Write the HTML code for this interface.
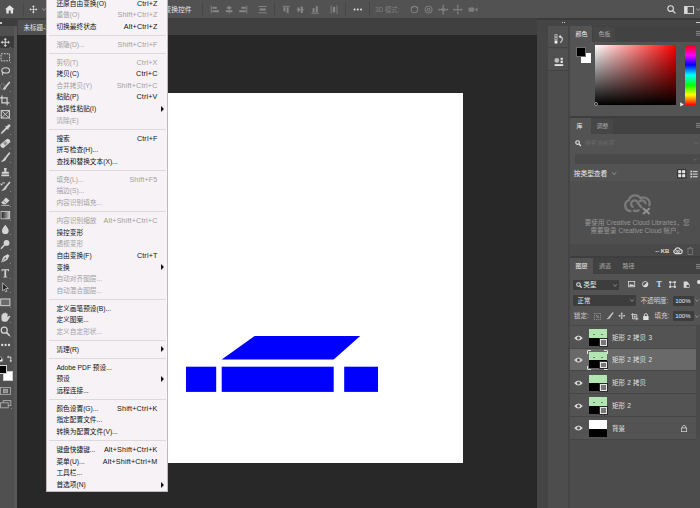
<!DOCTYPE html>
<html lang="zh-CN"><head><meta charset="utf-8"><title>Photoshop</title>
<style>
*{box-sizing:border-box;margin:0;padding:0}
html,body{width:700px;height:508px;overflow:hidden;background:#282828}
body{position:relative;font-family:"Liberation Sans","Noto Sans CJK SC",sans-serif;font-size:6.6px;color:#d6d6d6;-webkit-font-smoothing:antialiased}
.abs{position:absolute}
.ic{position:absolute;overflow:visible}
.t{position:absolute;white-space:nowrap;line-height:10px;height:10px}
/* top */
#opt{left:0;top:0;width:700px;height:18.2px;background:#525252}
#optline{left:0;top:18.2px;width:700px;height:1.6px;background:#3f3f3f}
#tabbar{left:0;top:19.8px;width:538px;height:15.3px;background:#404040}
#doctab{left:17.5px;top:19.8px;width:60px;height:15.3px;background:#4f4f4f}
#toolhdr{left:0;top:19.8px;width:16.6px;height:6.4px;background:#3d3d3d}
#tools{left:0;top:26.2px;width:16.6px;height:483px;background:linear-gradient(to right,#505050 0,#505050 13.6px,#585858 14.4px,#585858 100%)}
.tri{position:absolute;width:0;height:0;border-left:1.8px solid transparent;border-bottom:1.8px solid #bdbdbd}
/* canvas */
#canvas{left:92.6px;top:92.6px;width:370.1px;height:370.3px;background:#fff}
/* right dock */
#dock{left:537.4px;top:18px;width:163px;height:490px;background:#454545}
#iconcol{left:547.6px;top:26.2px;width:20.8px;height:482px;background:#4d4d4d}
.ibtn{position:absolute;left:547.6px;width:20.6px;height:22px;background:#505050;border-bottom:1px solid #434343}
.panel{position:absolute;left:570.2px;width:130px;background:#535353}
.ptabs{position:absolute;left:570.2px;width:130px;background:#424242}
.ptab{position:absolute;background:#535353}
/* menu */
#menu{left:45.8px;top:-2px;width:122px;background:#f6f2f6;border:0.6px solid #bdb9bd;color:#111;font-size:6.7px}
.mi{position:absolute;left:0;width:120.8px;height:11.66px;line-height:11.66px;white-space:nowrap}
.mi.dis{color:#a19ea1}
.ml{position:absolute;left:9.6px;top:0}
.ms{position:absolute;right:10.1px;top:0;font-size:7.2px;letter-spacing:0.14px}
.ma{position:absolute;right:3.2px;top:2.7px;width:0;height:0;border-top:3.1px solid transparent;border-bottom:3.1px solid transparent;border-left:3.7px solid #111}
.msep{position:absolute;left:1.8px;width:117.6px;height:1px;background:#dcd8dc}
/* layers */
.lrow{position:absolute;left:570.2px;width:126px;height:22.6px;background:#535353;border-bottom:0.8px solid #474747}
.lrow.sel{background:#696969}
.eye{position:absolute;left:4.2px;top:8.4px}
.th{position:absolute;left:18.9px;top:3px;width:17.7px;height:16.6px}
.thsel:before{content:'';position:absolute;left:-1.6px;top:-1.6px;right:-1.6px;bottom:-1.6px;border:0.9px solid #e4e4e4;border-radius:1px}
.thsel:after{content:'';position:absolute;left:2.4px;top:-2px;right:2.4px;bottom:-2px;background:#696969;z-index:0}
.thsel .hm{position:absolute;left:-2px;right:-2px;top:2.4px;bottom:2.4px;background:#696969}
.tg{position:absolute;left:0;top:0;width:17.7px;height:8.5px;background:#b3e5b3;z-index:1}
.tg i{position:absolute;top:5.2px;width:1.3px;height:0.9px;background:#5f8a5f}
.tb{position:absolute;left:0;top:8.5px;width:17.7px;height:8.1px;background:#000;z-index:1}
.tk{position:absolute;right:0.2px;bottom:0.2px;width:7px;height:6.6px;border:1.9px solid #e6e6e6;background:#777;z-index:2;outline:0.6px solid #2a2a2a}
.ln{position:absolute;left:41.7px;top:6.6px;line-height:10px;font-size:6.5px;color:#e2e2e2;white-space:nowrap;word-spacing:0.5px}
.lk{position:absolute;left:111.2px;top:7.6px}
.dk{position:absolute;background:#3d3d3d;border-radius:1.2px}
</style></head><body>

<!-- canvas document -->
<div id="canvas" class="abs"></div>
<svg class="ic" style="left:0;top:0" width="700" height="508" viewBox="0 0 700 508">
 <polygon points="254.6,336.1 360.2,336.1 333.7,359.4 221.7,359.4" fill="#0000ff"/>
 <rect x="186" y="366.7" width="30.2" height="25.2" fill="#0000ff"/>
 <rect x="221.7" y="366.7" width="112" height="25.2" fill="#0000ff"/>
 <rect x="344.2" y="366.7" width="33.8" height="25.2" fill="#0000ff"/>
</svg>

<!-- option bar -->
<div id="opt" class="abs"></div>
<div id="optline" class="abs"></div>
<div id="tabbar" class="abs"></div>
<div id="doctab" class="abs"></div>
<div class="t" style="left:23.4px;top:23.4px;font-size:6.5px;color:#ececec">未标题-1 @ 50%</div>

<!-- home / move -->
<svg class="ic" style="left:5.2px;top:5.1px" width="9.4" height="8.6" viewBox="0 0 10 9.6" preserveAspectRatio="none"><path d="M5 0.2 L10 4.8 H8.6 V9.4 H6 V6.2 H4 V9.4 H1.4 V4.8 H0 Z" fill="#e4e4e4"/></svg>
<div class="abs" style="left:23.4px;top:2px;width:0.8px;height:14px;background:#494949"></div>
<svg class="ic" style="left:28.5px;top:4.8px" width="8.8" height="8.8" viewBox="0 0 12 12"><path d="M6 0.4 L8 2.8 H6.6 V5.4 H9.2 V4 L11.6 6 L9.2 8 V6.6 H6.6 V9.2 H8 L6 11.6 L4 9.2 H5.4 V6.6 H2.8 V8 L0.4 6 L2.8 4 V5.4 H5.4 V2.8 H4 Z" fill="#d8d8d8"/></svg>
<svg class="ic" style="left:41.6px;top:8px" width="4" height="3" viewBox="0 0 4 3"><path d="M0.3 0.4 L2 2.4 L3.7 0.4" fill="none" stroke="#a8a8a8" stroke-width="0.8"/></svg>

<div class="t" style="left:150.8px;top:5.2px;font-size:6.8px;color:#e6e6e6">显示变换控件</div>
<div class="abs" style="left:202.2px;top:2px;width:0.8px;height:14px;background:#474747"></div>
<div class="abs" style="left:274px;top:2px;width:0.8px;height:14px;background:#474747"></div>
<div class="abs" style="left:344.8px;top:2px;width:0.8px;height:14px;background:#474747"></div>
<div class="abs" style="left:369px;top:2px;width:0.8px;height:14px;background:#474747"></div>
<!-- align icons -->
<svg class="ic" style="left:0;top:0" width="700" height="19" viewBox="0 0 700 19">
 <g fill="#868686">
  <rect x="210.8" y="5.6" width="0.9" height="7.8"/><rect x="212.4" y="6.8" width="4.4" height="2"/><rect x="212.4" y="10.2" width="6.6" height="2"/>
  <rect x="228.7" y="5.6" width="0.9" height="7.8"/><rect x="226.9" y="6.8" width="4.4" height="2"/><rect x="225.8" y="10.2" width="6.6" height="2"/>
  <rect x="246.4" y="5.6" width="0.9" height="7.8"/><rect x="241.4" y="6.8" width="4.4" height="2"/><rect x="239.2" y="10.2" width="6.6" height="2"/>
  <rect x="258.4" y="6" width="8.4" height="0.9"/><rect x="259.6" y="8.4" width="6" height="2.2"/><rect x="258.4" y="12.4" width="8.4" height="0.9"/>
  <rect x="282.4" y="5.8" width="7.4" height="0.9"/><rect x="283.4" y="7.2" width="2" height="4.2"/><rect x="286.6" y="7.2" width="2" height="6"/>
  <rect x="296.6" y="9.2" width="7.6" height="0.9"/><rect x="297.6" y="7.4" width="2" height="4.4"/><rect x="300.8" y="6.4" width="2" height="6.6"/>
  <rect x="311.4" y="12.8" width="7.6" height="0.9"/><rect x="312.6" y="8.2" width="2" height="4.2"/><rect x="315.8" y="6.2" width="2" height="6.2"/>
  <rect x="330.6" y="5.6" width="0.9" height="8.2"/><rect x="332.8" y="6.8" width="2.4" height="5.6"/><rect x="336.6" y="5.6" width="0.9" height="8.2"/>
 </g>
 <g fill="#e2e2e2"><circle cx="354.6" cy="9.6" r="1"/><circle cx="357.8" cy="9.6" r="1"/><circle cx="361" cy="9.6" r="1"/></g>
 <g fill="none" stroke="#7d7d7d" stroke-width="1.1">
  <circle cx="414.4" cy="9.6" r="3.2"/><path d="M411 8 Q414.4 4.4 418 8"/>
  <circle cx="428.6" cy="9.6" r="3.4"/><circle cx="428.6" cy="9.6" r="1.4"/>
  <path d="M443.2 5.2 V14 M438.8 9.6 H447.6"/><circle cx="443.2" cy="9.6" r="1.6"/>
  <path d="M457.8 5.4 V13.8 M453.6 9.6 H462"/>
 </g>
 <g fill="#7d7d7d"><path d="M441.8 6 L443.2 4.4 L444.6 6Z M441.8 13.2 L443.2 14.8 L444.6 13.2Z M439.6 8.2 L438 9.6 L439.6 11Z M446.8 8.2 L448.4 9.6 L446.8 11Z"/>
  <path d="M456.4 6.4 L457.8 4.6 L459.2 6.4Z M456.4 12.8 L457.8 14.6 L459.2 12.8Z M454.6 8.2 L452.8 9.6 L454.6 11Z M461 8.2 L462.8 9.6 L461 11Z"/>
  <rect x="468.6" y="7.4" width="5.6" height="4.4" rx="0.8"/><path d="M474.6 9.6 L477.6 7.4 V11.8Z"/></g>
</svg>
<div class="t" style="left:375px;top:4.6px;font-size:6.4px;color:#7e7e7e">3D 模式:</div>
<!-- search / workspace -->
<svg class="ic" style="left:667.4px;top:5px" width="9" height="9" viewBox="0 0 9 9"><circle cx="3.6" cy="3.6" r="2.8" fill="none" stroke="#e0e0e0" stroke-width="1.1"/><path d="M5.6 5.6 L8.4 8.4" stroke="#e0e0e0" stroke-width="1.3"/></svg>
<svg class="ic" style="left:683.6px;top:5.8px" width="10" height="8" viewBox="0 0 10 8"><rect x="0.5" y="0.5" width="9" height="7" fill="none" stroke="#dcdcdc" stroke-width="0.9"/><rect x="1" y="1" width="2.6" height="6" fill="#dcdcdc"/></svg>
<svg class="ic" style="left:696.4px;top:8.4px" width="4" height="3" viewBox="0 0 4 3"><path d="M0.3 0.4 L2 2.4 L3.7 0.4" fill="none" stroke="#a8a8a8" stroke-width="0.8"/></svg>

<!-- tools -->
<div id="tools" class="abs"></div>
<div id="toolhdr" class="abs"></div>
<div class="abs" style="left:0.4px;top:22.4px;width:1.6px;height:1.6px;background:#c8c8c8"></div>
<div class="abs" style="left:0;top:36.2px;width:13.6px;height:12.3px;background:#3a3a3a;border-radius:1px"></div>
<svg class="ic" style="left:0.30px;top:37.30px" width="10.6" height="10.6" viewBox="0 0 12 12"><path d="M6 0.8 L8 3 H6.6 V5.4 H9 V4 L11.2 6 L9 8 V6.6 H6.6 V9 H8 L6 11.2 L4 9 H5.4 V6.6 H3 V8 L0.8 6 L3 4 V5.4 H5.4 V3 H4 Z" fill="#d4d4d4"/></svg>
<div class="tri" style="left:10.2px;top:47.4px"></div>
<svg class="ic" style="left:0.30px;top:51.70px" width="10.6" height="10.6" viewBox="0 0 12 12"><rect x="1.2" y="2" width="9.6" height="8" fill="none" stroke="#d4d4d4" stroke-width="1.1" stroke-dasharray="2 1.2"/></svg>
<div class="tri" style="left:10.2px;top:61.8px"></div>
<svg class="ic" style="left:0.30px;top:65.90px" width="10.6" height="10.6" viewBox="0 0 12 12"><ellipse cx="6.4" cy="5" rx="4.4" ry="3" fill="none" stroke="#d4d4d4" stroke-width="1.2"/><path d="M3 7.2 Q2 9 3.2 10.6" fill="none" stroke="#d4d4d4" stroke-width="1.1"/></svg>
<div class="tri" style="left:10.2px;top:76.0px"></div>
<svg class="ic" style="left:0.30px;top:80.50px" width="10.6" height="10.6" viewBox="0 0 12 12"><path d="M10.6 1.6 L6.6 6.4" stroke="#d4d4d4" stroke-width="1.9" stroke-linecap="round"/><ellipse cx="5.4" cy="8" rx="2.2" ry="1.4" transform="rotate(-48 5.4 8)" fill="#d4d4d4"/><ellipse cx="3" cy="6.4" rx="2.8" ry="3.2" fill="none" stroke="#a0a0a0" stroke-width="0.9" stroke-dasharray="1.4 1"/></svg>
<div class="tri" style="left:10.2px;top:90.6px"></div>
<svg class="ic" style="left:0.30px;top:94.90px" width="10.6" height="10.6" viewBox="0 0 12 12"><path d="M2.2 0.6 V9 H10.8 M-0.6 3.2 H8 V11.6" fill="none" stroke="#d4d4d4" stroke-width="1.35"/></svg>
<div class="tri" style="left:10.2px;top:105.0px"></div>
<svg class="ic" style="left:0.30px;top:109.30px" width="10.6" height="10.6" viewBox="0 0 12 12"><rect x="1.4" y="1.8" width="9.2" height="8.4" fill="none" stroke="#d4d4d4" stroke-width="1.2"/><path d="M1.4 1.8 L10.6 10.2 M10.6 1.8 L1.4 10.2" stroke="#d4d4d4" stroke-width="1"/></svg>
<div class="tri" style="left:10.2px;top:119.4px"></div>
<svg class="ic" style="left:0.30px;top:123.50px" width="10.6" height="10.6" viewBox="0 0 12 12"><path d="M10.4 1.8 L8.6 3.6" stroke="#d4d4d4" stroke-width="3" stroke-linecap="round"/><path d="M6.6 3 L9.2 5.6" stroke="#d4d4d4" stroke-width="1.4" stroke-linecap="round"/><path d="M8 4.2 L2.6 9.6" stroke="#d4d4d4" stroke-width="2" stroke-linecap="round"/><path d="M2.6 9.6 L1.2 11" stroke="#d4d4d4" stroke-width="1" stroke-linecap="round"/></svg>
<div class="tri" style="left:10.2px;top:133.6px"></div>
<svg class="ic" style="left:0.30px;top:137.90px" width="10.6" height="10.6" viewBox="0 0 12 12"><rect x="-0.2" y="3.3" width="12.4" height="5.4" rx="2.2" fill="#d4d4d4" transform="rotate(-40 6 6)"/><rect x="4.2" y="4.2" width="3.6" height="3.6" fill="#535353" transform="rotate(-40 6 6)" opacity="0.5"/></svg>
<div class="tri" style="left:10.2px;top:148.0px"></div>
<svg class="ic" style="left:0.30px;top:152.30px" width="10.6" height="10.6" viewBox="0 0 12 12"><path d="M10.6 1.4 L6.4 6.6" stroke="#d4d4d4" stroke-width="1.9" stroke-linecap="round"/><path d="M5.6 6.2 L7 7.6 Q6.2 10.4 1.4 10.8 Q4 9 5.6 6.2Z" fill="#d4d4d4" stroke="#d4d4d4" stroke-width="0.6"/></svg>
<div class="tri" style="left:10.2px;top:162.4px"></div>
<svg class="ic" style="left:0.30px;top:166.70px" width="10.6" height="10.6" viewBox="0 0 12 12"><path d="M4.4 1.2 H7.6 L7 5.4 H10 V7.6 H2 V5.4 H5 Z M1.6 8.6 H10.4 V10.4 H1.6Z" fill="#d4d4d4"/></svg>
<div class="tri" style="left:10.2px;top:176.8px"></div>
<svg class="ic" style="left:0.30px;top:181.10px" width="10.6" height="10.6" viewBox="0 0 12 12"><path d="M10.8 1.6 L6.8 6.6" stroke="#d4d4d4" stroke-width="1.9" stroke-linecap="round"/><path d="M6 6.2 L7.4 7.6 Q6.4 10.4 2 10.8 Q4.6 9 6 6.2Z" fill="#d4d4d4" stroke="#d4d4d4" stroke-width="0.6"/><path d="M1.4 4.6 A2.8 2.8 0 0 1 5.6 2.4" fill="none" stroke="#d4d4d4" stroke-width="1.1"/><path d="M0.4 2.6 L1.2 5.2 L3.4 4.2Z" fill="#d4d4d4"/></svg>
<div class="tri" style="left:10.2px;top:191.2px"></div>
<svg class="ic" style="left:0.30px;top:195.50px" width="10.6" height="10.6" viewBox="0 0 12 12"><path d="M6.8 1.6 L10.8 5.2 L6.6 9.4 H3.4 L1.4 7.4 Z" fill="#d4d4d4"/><path d="M1.6 10.6 H10.6" stroke="#d4d4d4" stroke-width="0.9"/><path d="M3.6 5.2 L7.6 8.6" stroke="#535353" stroke-width="0.8"/></svg>
<div class="tri" style="left:10.2px;top:205.6px"></div>
<svg class="ic" style="left:0.30px;top:209.90px" width="10.6" height="10.6" viewBox="0 0 12 12"><defs><linearGradient id="gt" x1="0" x2="1"><stop offset="0" stop-color="#1e1e1e"/><stop offset="1" stop-color="#c4c4c4"/></linearGradient></defs><rect x="1.2" y="1.8" width="9.8" height="8.2" fill="url(#gt)" stroke="#d4d4d4" stroke-width="0.9"/></svg>
<div class="tri" style="left:10.2px;top:220.0px"></div>
<svg class="ic" style="left:0.30px;top:224.30px" width="10.6" height="10.6" viewBox="0 0 12 12"><path d="M6 0.8 Q9.8 5.6 9.8 7.6 A3.8 3.8 0 0 1 2.2 7.6 Q2.2 5.6 6 0.8Z" fill="#d4d4d4"/></svg>
<div class="tri" style="left:10.2px;top:234.4px"></div>
<svg class="ic" style="left:0.30px;top:238.70px" width="10.6" height="10.6" viewBox="0 0 12 12"><circle cx="7.4" cy="4.4" r="3.3" fill="#d4d4d4"/><path d="M5.2 6.6 L1.6 10.6" stroke="#d4d4d4" stroke-width="1.7" stroke-linecap="round"/></svg>
<div class="tri" style="left:10.2px;top:248.8px"></div>
<svg class="ic" style="left:0.30px;top:253.10px" width="10.6" height="10.6" viewBox="0 0 12 12"><path d="M8.6 1 L11 3.4 L9.6 4.6 Q9.4 8 4 9.8 L1.2 10.8 L2.2 8 Q4 2.6 7.4 2.4Z" fill="#d4d4d4"/><circle cx="6" cy="6" r="1" fill="#535353"/><path d="M1.6 10.4 L5.4 6.6" stroke="#535353" stroke-width="0.7"/></svg>
<div class="tri" style="left:10.2px;top:263.2px"></div>
<svg class="ic" style="left:0.30px;top:267.50px" width="10.6" height="10.6" viewBox="0 0 12 12"><path d="M1.8 1.4 H10.2 V3.8 H9.4 Q9.2 2.6 8.2 2.6 H7 V9.4 Q7 10 8.2 10 V10.8 H3.8 V10 Q5 10 5 9.4 V2.6 H3.8 Q2.8 2.6 2.6 3.8 H1.8Z" fill="#d4d4d4"/></svg>
<div class="tri" style="left:10.2px;top:277.6px"></div>
<svg class="ic" style="left:0.30px;top:281.90px" width="10.6" height="10.6" viewBox="0 0 12 12"><path d="M3 1 L9.4 7.4 H6.4 L7.8 10.6 L6.4 11.2 L5 8 L3 10Z" fill="#1e1e1e" stroke="#d4d4d4" stroke-width="0.8"/></svg>
<div class="tri" style="left:10.2px;top:292.0px"></div>
<svg class="ic" style="left:0.30px;top:296.50px" width="10.6" height="10.6" viewBox="0 0 12 12"><rect x="0.8" y="2.2" width="10.4" height="7.6" fill="#6a6a6a" stroke="#d4d4d4" stroke-width="1.1"/></svg>
<div class="tri" style="left:10.2px;top:306.6px"></div>
<svg class="ic" style="left:0.30px;top:311.60px" width="10.6" height="10.6" viewBox="0 0 12 12"><path transform="translate(-0.8 0) scale(1.12 1)" d="M2.2 6.4 V3.4 Q2.2 2.6 3 2.6 Q3.6 2.6 3.6 3.4 V2 Q3.6 1.2 4.4 1.2 Q5.2 1.2 5.2 2 V1.4 Q5.2 0.6 6 0.6 Q6.8 0.6 6.8 1.4 V2 Q6.8 1.4 7.6 1.4 Q8.4 1.4 8.4 2.2 V6 L9.6 4.6 Q10.4 3.8 11 4.4 Q11.4 4.8 10.8 5.6 L8.6 9.6 Q8 11 6.4 11 H5 Q2.2 11 2.2 8Z" fill="#d4d4d4"/></svg>
<div class="tri" style="left:10.2px;top:321.7px"></div>
<svg class="ic" style="left:0.30px;top:325.90px" width="10.6" height="10.6" viewBox="0 0 12 12"><circle cx="4.8" cy="4.8" r="3.4" fill="none" stroke="#d4d4d4" stroke-width="1.4"/><path d="M7.2 7.2 L11 11" stroke="#d4d4d4" stroke-width="1.8"/></svg>
<div class="tri" style="left:10.2px;top:336.0px"></div>
<svg class="ic" style="left:0;top:343.4px" width="12" height="4" viewBox="0 0 12 4"><g fill="#e0e0e0"><circle cx="2.2" cy="2" r="1.15"/><circle cx="5.6" cy="2" r="1.15"/><circle cx="9" cy="2" r="1.15"/></g></svg>
<!-- default/swap -->
<svg class="ic" style="left:0;top:355.2px" width="14" height="8" viewBox="0 0 14 8"><rect x="0" y="3.6" width="2.6" height="3" fill="#e6e6e6"/><rect x="-1.4" y="2" width="2.6" height="3" fill="#111" stroke="#e6e6e6" stroke-width="0.5"/><path d="M8.4 2 H10.8 V6" fill="none" stroke="#e0e0e0" stroke-width="0.9"/><path d="M8.6 0.6 L7 2 L8.6 3.4Z M9.4 5.4 L10.8 7.2 L12.2 5.4Z" fill="#e0e0e0"/></svg>
<div class="abs" style="left:2.8px;top:370.6px;width:10.4px;height:10.2px;background:#fff;border:0.5px solid #cfcfcf"></div>
<div class="abs" style="left:-3px;top:365.4px;width:10px;height:9px;background:#000;border:0.7px solid #d0d0d0"></div>
<svg class="ic" style="left:-0.2px;top:386.8px" width="11" height="8" viewBox="0 0 11 8"><rect x="0.5" y="0.5" width="10" height="7" fill="none" stroke="#a8a8a8" stroke-width="0.9"/><rect x="3.4" y="2.2" width="4.2" height="3.6" fill="#8c8c8c" stroke="#bdbdbd" stroke-width="0.6"/></svg>
<svg class="ic" style="left:0px;top:400.2px" width="12" height="9" viewBox="0 0 12 9"><rect x="3.2" y="0.6" width="7.6" height="5" fill="#535353" stroke="#adadad" stroke-width="0.9"/><rect x="0.6" y="2.8" width="7.6" height="5" fill="#535353" stroke="#adadad" stroke-width="0.9"/></svg>
<div class="tri" style="left:10.6px;top:408px"></div>

<!-- right dock -->
<div id="dock" class="abs"></div>
<div class="abs" style="left:537.4px;top:18px;width:163px;height:1.6px;background:#3a3a3a"></div>
<div id="iconcol" class="abs"></div>
<div class="ibtn" style="top:26px"></div>
<div class="ibtn" style="top:49px"></div>
<div class="abs" style="left:561.6px;top:22.2px;width:1.2px;height:1.2px;background:#c9c9c9"></div>
<div class="abs" style="left:563.6px;top:22.2px;width:1.2px;height:1.2px;background:#c9c9c9"></div>
<div class="abs" style="left:696.4px;top:22.2px;width:1.2px;height:1.2px;background:#c9c9c9"></div>
<div class="abs" style="left:698.4px;top:22.2px;width:1.2px;height:1.2px;background:#c9c9c9"></div>
<!-- history icon -->
<svg class="ic" style="left:554px;top:34px" width="10" height="10" viewBox="0 0 10 10"><rect x="0.9" y="0.7" width="2.2" height="2.2" fill="none" stroke="#cfcfcf" stroke-width="0.7"/><rect x="0.9" y="3.7" width="2.2" height="2.2" fill="none" stroke="#cfcfcf" stroke-width="0.7"/><rect x="0.6" y="6.6" width="2.8" height="2.9" fill="#f0f0f0"/><path d="M5.4 2.6 Q8.8 2.6 8.2 6 Q7.8 8 6 8.6" fill="none" stroke="#e0e0e0" stroke-width="1.1"/><path d="M6.6 0.8 L4.6 2.6 L6.6 4.4Z" fill="#e0e0e0"/></svg>
<svg class="ic" style="left:553.8px;top:56.6px" width="10" height="10" viewBox="0 0 10 10"><circle cx="2.8" cy="3.4" r="2.4" fill="#bdbdbd"/><rect x="6.6" y="0.8" width="2.2" height="2" fill="#e6e6e6"/><rect x="6.6" y="3.6" width="2.2" height="2.4" fill="#e6e6e6"/><rect x="0.6" y="7.2" width="8.6" height="1.8" fill="#e6e6e6"/></svg>

<!-- color panel -->
<div class="ptabs" style="top:26.2px;height:15.4px"></div>
<div class="ptab" style="left:570.2px;top:26.2px;width:22.2px;height:15.6px"></div>
<div class="panel" style="top:41.6px;height:74px"></div>
<div class="t" style="left:575.4px;top:29px;font-size:6px;color:#f0f0f0">颜色</div>
<div class="abs" style="left:593.4px;top:26.8px;width:22px;height:14.8px;background:#474747"></div><div class="t" style="left:598.6px;top:29px;font-size:6px;color:#a9a9a9">色板</div>
<svg class="ic" style="left:696px;top:31px" width="4" height="5" viewBox="0 0 4 5"><path d="M0 0.6 H4 M0 2.4 H4 M0 4.2 H4" stroke="#a2a2a2" stroke-width="0.7"/></svg>
<div class="abs" style="left:581.2px;top:53.4px;width:10px;height:9.8px;background:#fff"></div>
<div class="abs" style="left:576px;top:47.4px;width:9.6px;height:9.8px;background:#000;border:0.7px solid #6e6e6e"></div>
<div class="abs" style="left:595px;top:45.4px;width:81.2px;height:59.6px;background:linear-gradient(to top,#000,rgba(0,0,0,0)),linear-gradient(to right,#fff,#f00)"></div>
<div class="abs" style="left:685.2px;top:45.4px;width:11px;height:59.6px;background:linear-gradient(to bottom,#f00 0%,#f0f 17%,#00f 33%,#0ff 50%,#0f0 67%,#ff0 83%,#f00 100%)"></div>
<div class="abs" style="left:593.8px;top:101.6px;width:4.2px;height:4.2px;border:0.6px solid #9c9c9c;border-radius:50%;background:#050505"></div>
<svg class="ic" style="left:680.4px;top:102.2px" width="4" height="4.8" viewBox="0 0 3.4 4"><path d="M0.2 0.2 L3.2 2 L0.2 3.8Z" fill="#f0f0f0"/></svg>

<div class="abs" style="left:569.6px;top:115.8px;width:131px;height:2.4px;background:#3e3e3e"></div>
<div class="abs" style="left:569.6px;top:256.2px;width:131px;height:1.8px;background:#3e3e3e"></div>
<!-- libraries panel -->
<div class="ptabs" style="top:118.2px;height:15.4px"></div>
<div class="ptab" style="left:570.2px;top:118.2px;width:20.8px;height:15.6px"></div>
<div class="panel" style="top:133.6px;height:122.6px"></div>
<div class="t" style="left:576.6px;top:121px;font-size:6px;color:#f0f0f0">库</div>
<div class="abs" style="left:591.4px;top:118.8px;width:22px;height:14.8px;background:#474747"></div><div class="t" style="left:596.4px;top:121px;font-size:6px;color:#a9a9a9">调整</div>
<svg class="ic" style="left:696px;top:123px" width="4" height="5" viewBox="0 0 4 5"><path d="M0 0.6 H4 M0 2.4 H4 M0 4.2 H4" stroke="#a2a2a2" stroke-width="0.7"/></svg>
<svg class="ic" style="left:574.6px;top:140.4px" width="6.4" height="6.4" viewBox="0 0 9 9"><circle cx="3.6" cy="3.6" r="2.6" fill="none" stroke="#e6e6e6" stroke-width="1.5"/><path d="M5.6 5.6 L8.4 8.4" stroke="#e6e6e6" stroke-width="1.7"/></svg>
<div class="t" style="left:584px;top:138.4px;font-size:6px;color:#6a6a6a;font-style:italic">搜索当前库</div>
<svg class="ic" style="left:694px;top:142.4px" width="4" height="3" viewBox="0 0 4 3"><path d="M0.3 0.4 L2 2.4 L3.7 0.4" fill="none" stroke="#6c6c6c" stroke-width="0.8"/></svg>
<div class="abs" style="left:575px;top:154px;width:125px;height:9.8px;background:#4a4a4a"></div>
<svg class="ic" style="left:693px;top:157.6px" width="4" height="3" viewBox="0 0 4 3"><path d="M0.3 0.4 L2 2.4 L3.7 0.4" fill="none" stroke="#6c6c6c" stroke-width="0.8"/></svg>
<div class="t" style="left:573.8px;top:168.8px;font-size:6.7px;color:#eaeaea">按类型查看</div>
<svg class="ic" style="left:611.8px;top:171.8px" width="4.4" height="3.2" viewBox="0 0 4.4 3.2"><path d="M0.3 0.4 L2.2 2.6 L4.1 0.4" fill="none" stroke="#a6a6a6" stroke-width="0.8"/></svg>
<svg class="ic" style="left:677.4px;top:168.8px" width="9.4" height="9.4" viewBox="0 0 8 8"><rect x="0" y="0" width="8" height="8" fill="#333" rx="0.6"/><g fill="#e6e6e6"><rect x="1" y="1" width="2.6" height="2.6"/><rect x="4.4" y="1" width="2.6" height="2.6"/><rect x="1" y="4.4" width="2.6" height="2.6"/><rect x="4.4" y="4.4" width="2.6" height="2.6"/></g></svg>
<svg class="ic" style="left:690.4px;top:169.8px" width="8" height="8" viewBox="0 0 8 8"><g fill="#cfcfcf"><rect x="0.4" y="0.6" width="1.8" height="1.8"/><rect x="3" y="0.9" width="4.6" height="1.2"/><rect x="0.4" y="3.2" width="1.8" height="1.8"/><rect x="3" y="3.5" width="4.6" height="1.2"/><rect x="0.4" y="5.8" width="1.8" height="1.8"/><rect x="3" y="6.1" width="4.6" height="1.2"/></g></svg>
<div class="abs" style="left:570.2px;top:180.6px;width:130px;height:63.6px;background:#4f4f4f"></div>
<div class="abs" style="left:570.2px;top:244.4px;width:130px;height:11.8px;background:#494949"></div>
<!-- cloud icon -->
<svg class="ic" style="left:623.2px;top:194.2px" width="29" height="21" viewBox="0 0 29 21"><g fill="none" stroke="#7b7b7b" stroke-width="2.3" stroke-linecap="round"><path d="M7.4 17 A5.6 5.6 0 0 1 5.8 6.2 A6.6 6.6 0 0 1 17.6 4.2 A6.2 6.2 0 0 1 26.4 11.4"/><path d="M9.6 12.8 A3.5 3.5 0 1 1 15 9.2 L18.6 13.4"/><path d="M16.6 7.4 A3.6 3.6 0 0 1 22.6 9.4"/><path d="M11 16.6 Q13.4 17.6 15.6 16.2"/></g><path d="M20 14.2 L26.6 20 M26.6 14.2 L20 20" stroke="#909090" stroke-width="2.1" fill="none"/></svg>
<div class="t" style="left:584.8px;top:217.8px;font-size:6.55px;color:#969696">要使用 Creative Cloud Libraries，您</div>
<div class="t" style="left:590.4px;top:226.2px;font-size:6.55px;color:#969696">需要登录 Creative Cloud 帐户。</div>
<div class="t" style="left:655.2px;top:246.2px;font-size:5.9px;color:#dedede;font-weight:bold">-- KB</div>
<svg class="ic" style="left:672.6px;top:247.2px" width="9.2" height="7.4" viewBox="0 0 10 7.4"><path d="M2.4 6.8 A2.2 2.2 0 0 1 2.4 2.6 A3 3 0 0 1 8 2.6 A2.1 2.1 0 0 1 7.8 6.8 Z" fill="none" stroke="#dcdcdc" stroke-width="1.3"/><circle cx="4.2" cy="4.4" r="1.1" fill="none" stroke="#dcdcdc" stroke-width="0.9"/><circle cx="6.2" cy="4.6" r="1.1" fill="none" stroke="#dcdcdc" stroke-width="0.9"/></svg>
<svg class="ic" style="left:686.6px;top:247px" width="6.4" height="8" viewBox="0 0 6.4 8"><path d="M0.2 1.6 H6.2 M2.2 1.4 V0.5 H4.2 V1.4 M1 2 V7.5 H5.4 V2" fill="none" stroke="#777" stroke-width="0.9"/></svg>

<!-- layers panel -->
<div class="ptabs" style="top:257.8px;height:16.6px"></div>
<div class="ptab" style="left:570.2px;top:257.8px;width:23.2px;height:16.8px"></div>
<div class="panel" style="top:274.4px;height:233.6px;background:#535353"></div>
<div class="t" style="left:575.6px;top:261.2px;font-size:6px;color:#f0f0f0">图层</div>
<div class="t" style="left:599px;top:261.2px;font-size:6px;color:#a9a9a9">通道</div>
<div class="t" style="left:622.4px;top:261.2px;font-size:6px;color:#a9a9a9">路径</div>
<svg class="ic" style="left:696px;top:263.6px" width="4" height="5" viewBox="0 0 4 5"><path d="M0 0.6 H4 M0 2.4 H4 M0 4.2 H4" stroke="#a2a2a2" stroke-width="0.7"/></svg>
<!-- filter row -->
<div class="dk" style="left:572.8px;top:279.8px;width:46.4px;height:10.2px"></div>
<svg class="ic" style="left:576px;top:281.8px" width="6.2" height="6.2" viewBox="0 0 9 9"><circle cx="3.6" cy="3.6" r="2.6" fill="none" stroke="#e6e6e6" stroke-width="1.5"/><path d="M5.6 5.6 L8.4 8.4" stroke="#e6e6e6" stroke-width="1.7"/></svg>
<div class="t" style="left:583.6px;top:279.8px;font-size:6.4px;color:#ececec">类型</div>
<svg class="ic" style="left:613px;top:283.6px" width="4" height="3" viewBox="0 0 4 3"><path d="M0.3 0.4 L2 2.4 L3.7 0.4" fill="none" stroke="#9a9a9a" stroke-width="0.8"/></svg>
<svg class="ic" style="left:628.4px;top:281.4px" width="7.2" height="6.2" viewBox="0 0 8 7"><rect x="0.5" y="0.5" width="7" height="6" fill="none" stroke="#dadada" stroke-width="0.9"/><path d="M1.2 5.6 L3 3.2 L4.4 4.6 L5.4 3.8 L6.8 5.6Z" fill="#dadada"/></svg>
<svg class="ic" style="left:642.2px;top:281.4px" width="6.4" height="6.4" viewBox="0 0 7 7"><circle cx="3.5" cy="3.5" r="3" fill="none" stroke="#dadada" stroke-width="0.9"/><path d="M3.5 0.5 A3 3 0 0 1 3.5 6.5Z" fill="#dadada" transform="rotate(45 3.5 3.5)"/></svg>
<div class="t" style="left:656.6px;top:279.8px;font-size:7.8px;color:#e2e2e2;font-family:'Liberation Serif',serif;font-weight:bold">T</div>
<svg class="ic" style="left:668.9px;top:281px" width="7" height="7" viewBox="0 0 8 8"><rect x="1.4" y="1.4" width="5.2" height="5.2" fill="none" stroke="#dadada" stroke-width="0.9"/><g fill="#dadada"><rect x="0.2" y="0.2" width="2.2" height="2.2"/><rect x="5.6" y="0.2" width="2.2" height="2.2"/><rect x="0.2" y="5.6" width="2.2" height="2.2"/><rect x="5.6" y="5.6" width="2.2" height="2.2"/></g></svg>
<svg class="ic" style="left:683px;top:280.9px" width="7" height="7.4" viewBox="0 0 8 8.4"><path d="M0.8 0.6 H4.6 L6.6 2.6 V7.8 H0.8Z" fill="#dadada"/><rect x="3.6" y="4.2" width="3.6" height="3.2" fill="#535353" stroke="#dadada" stroke-width="0.7"/></svg>
<div class="abs" style="left:697.4px;top:280.4px;width:4px;height:4px;border-radius:50%;background:#e0e0e0"></div>
<!-- blend row -->
<div class="dk" style="left:572.8px;top:295.4px;width:63.6px;height:10.6px"></div>
<div class="t" style="left:577.6px;top:295.6px;font-size:6.4px;color:#ececec">正常</div>
<svg class="ic" style="left:630px;top:299.4px" width="4" height="3" viewBox="0 0 4 3"><path d="M0.3 0.4 L2 2.4 L3.7 0.4" fill="none" stroke="#9a9a9a" stroke-width="0.8"/></svg>
<div class="t" style="left:640.4px;top:295.6px;font-size:6.55px;color:#d2d2d2">不透明度:</div>
<div class="dk" style="left:673.4px;top:295.6px;width:20.2px;height:10.2px"></div>
<div class="t" style="left:675.2px;top:295.6px;font-size:6px;color:#ececec">100%</div>
<svg class="ic" style="left:695.4px;top:299.4px" width="4" height="3" viewBox="0 0 4 3"><path d="M0.3 0.4 L2 2.4 L3.7 0.4" fill="none" stroke="#9a9a9a" stroke-width="0.8"/></svg>
<!-- lock row -->
<div class="t" style="left:573.8px;top:311.2px;font-size:6.6px;color:#cfcfcf">锁定:</div>
<svg class="ic" style="left:593.8px;top:312.8px" width="7" height="7" viewBox="0 0 7 7"><rect x="0.4" y="0.4" width="6.2" height="6.2" fill="none" stroke="#a8a8a8" stroke-width="0.7" stroke-dasharray="1.2 0.8"/><rect x="2.2" y="2.2" width="1.3" height="1.3" fill="#a8a8a8"/><rect x="3.5" y="3.5" width="1.3" height="1.3" fill="#a8a8a8"/></svg>
<svg class="ic" style="left:605.8px;top:312.4px" width="7.8" height="7.8" viewBox="0 0 12 12"><path d="M10.6 1.4 L6.4 6.6" stroke="#cfcfcf" stroke-width="2.1" stroke-linecap="round"/><path d="M5.6 6.2 L7 7.6 Q6.2 10.4 1.4 10.8 Q4 9 5.6 6.2Z" fill="#cfcfcf" stroke="#cfcfcf" stroke-width="0.7"/></svg>
<svg class="ic" style="left:617.6px;top:312.4px" width="7.6" height="7.6" viewBox="0 0 12 12"><path d="M6 0.4 L8 2.8 H6.6 V5.4 H9.2 V4 L11.6 6 L9.2 8 V6.6 H6.6 V9.2 H8 L6 11.6 L4 9.2 H5.4 V6.6 H2.8 V8 L0.4 6 L2.8 4 V5.4 H5.4 V2.8 H4 Z" fill="#d4d4d4"/></svg>
<svg class="ic" style="left:630.6px;top:312.6px" width="7.6" height="7.4" viewBox="0 0 7.6 7.4"><path d="M1.6 0.2 V5.8 H7.4 M0.2 1.6 H5.8 V7.2" fill="none" stroke="#cfcfcf" stroke-width="1"/><rect x="2.8" y="2.8" width="1.8" height="1.8" fill="#cfcfcf"/></svg>
<svg class="ic" style="left:643.4px;top:312.6px" width="5.8" height="7.2" viewBox="0 0 6.4 8"><path d="M1.5 3.6 V2.4 A1.7 1.7 0 0 1 4.9 2.4 V3.6" fill="none" stroke="#e0e0e0" stroke-width="1"/><rect x="0.2" y="3.4" width="6" height="4.4" fill="#e0e0e0"/></svg>
<div class="t" style="left:654.4px;top:311.2px;font-size:6.6px;color:#cfcfcf">填充:</div>
<div class="dk" style="left:673.4px;top:311.2px;width:20.2px;height:10.2px"></div>
<div class="t" style="left:675.2px;top:311.2px;font-size:6px;color:#ececec">100%</div>
<svg class="ic" style="left:695.4px;top:315px" width="4" height="3" viewBox="0 0 4 3"><path d="M0.3 0.4 L2 2.4 L3.7 0.4" fill="none" stroke="#9a9a9a" stroke-width="0.8"/></svg>
<div class="abs" style="left:570.2px;top:325px;width:130px;height:1px;background:#484848"></div>
<div class="abs" style="left:570.2px;top:439px;width:130px;height:69px;background:#4c4c4c"></div>
<div class="lrow" style="top:326.20px">
<svg class="eye" width="9" height="6" viewBox="0 0 9 6"><path d="M0.2 3 Q4.5 -2.2 8.8 3 Q4.5 8.2 0.2 3Z" fill="#d8d8d8"/><circle cx="4.5" cy="3" r="1.5" fill="#535353"/></svg>
<div class="th"><div class="tg"><i style="left:4.4px"></i><i style="left:12.4px"></i></div><div class="tb"></div><div class="tk"></div></div>
<span class="ln">矩形 2 拷贝 3</span>
</div>
<div class="lrow sel" style="top:348.90px">
<svg class="eye" width="9" height="6" viewBox="0 0 9 6"><path d="M0.2 3 Q4.5 -2.2 8.8 3 Q4.5 8.2 0.2 3Z" fill="#d8d8d8"/><circle cx="4.5" cy="3" r="1.5" fill="#535353"/></svg>
<div class="th thsel"><div class="hm"></div><div class="tg"><i style="left:4.4px"></i><i style="left:12.4px"></i></div><div class="tb"></div><div class="tk"></div></div>
<span class="ln">矩形 2 拷贝 2</span>
</div>
<div class="lrow" style="top:371.60px">
<svg class="eye" width="9" height="6" viewBox="0 0 9 6"><path d="M0.2 3 Q4.5 -2.2 8.8 3 Q4.5 8.2 0.2 3Z" fill="#d8d8d8"/><circle cx="4.5" cy="3" r="1.5" fill="#535353"/></svg>
<div class="th"><div class="tg"></div><div class="tb"></div><div class="tk"></div></div>
<span class="ln">矩形 2 拷贝</span>
</div>
<div class="lrow" style="top:394.30px">
<svg class="eye" width="9" height="6" viewBox="0 0 9 6"><path d="M0.2 3 Q4.5 -2.2 8.8 3 Q4.5 8.2 0.2 3Z" fill="#d8d8d8"/><circle cx="4.5" cy="3" r="1.5" fill="#535353"/></svg>
<div class="th"><div class="tg"><i style="left:4.4px"></i><i style="left:12.4px"></i></div><div class="tb"></div><div class="tk"></div></div>
<span class="ln">矩形 2</span>
</div>
<div class="lrow" style="top:417.00px">
<svg class="eye" width="9" height="6" viewBox="0 0 9 6"><path d="M0.2 3 Q4.5 -2.2 8.8 3 Q4.5 8.2 0.2 3Z" fill="#d8d8d8"/><circle cx="4.5" cy="3" r="1.5" fill="#535353"/></svg>
<div class="th"><div class="tg" style="background:#fff"></div><div class="tb"></div></div>
<span class="ln">背景</span>
<svg class="lk" width="6.2" height="7" viewBox="0 0 7 8"><path d="M1.6 3.6 V2.4 A1.9 1.9 0 0 1 5.4 2.4 V3.6" fill="none" stroke="#cfcfcf" stroke-width="0.9"/><rect x="0.6" y="3.4" width="5.8" height="4.2" fill="none" stroke="#cfcfcf" stroke-width="0.9"/></svg>
</div>
<div class="abs" style="left:696.2px;top:326px;width:3.8px;height:113px;background:#4a4a4a"></div>

<!-- Edit menu -->
<div id="menu" class="abs" style="height:493.79px">
<div class="abs" style="left:0;top:2px;width:120px;height:0">
<div class="mi" style="top:-3.43px"><span class="ml">还原自由变换(O)</span><span class="ms">Ctrl+Z</span></div>
<div class="mi dis" style="top:8.23px"><span class="ml">重做(O)</span><span class="ms">Shift+Ctrl+Z</span></div>
<div class="mi" style="top:19.89px"><span class="ml">切换最终状态</span><span class="ms">Alt+Ctrl+Z</span></div>
<div class="msep" style="top:33.77px"></div>
<div class="mi dis" style="top:37.70px"><span class="ml">渐隐(D)...</span><span class="ms">Shift+Ctrl+F</span></div>
<div class="msep" style="top:51.59px"></div>
<div class="mi dis" style="top:55.51px"><span class="ml">剪切(T)</span><span class="ms">Ctrl+X</span></div>
<div class="mi" style="top:67.17px"><span class="ml">拷贝(C)</span><span class="ms">Ctrl+C</span></div>
<div class="mi dis" style="top:78.83px"><span class="ml">合并拷贝(Y)</span><span class="ms">Shift+Ctrl+C</span></div>
<div class="mi" style="top:90.49px"><span class="ml">粘贴(P)</span><span class="ms">Ctrl+V</span></div>
<div class="mi" style="top:102.15px"><span class="ml">选择性粘贴(I)</span><span class="ma"></span></div>
<div class="mi dis" style="top:113.81px"><span class="ml">清除(E)</span></div>
<div class="msep" style="top:127.69px"></div>
<div class="mi" style="top:131.62px"><span class="ml">搜索</span><span class="ms">Ctrl+F</span></div>
<div class="mi" style="top:143.28px"><span class="ml">拼写检查(H)...</span></div>
<div class="mi" style="top:154.94px"><span class="ml">查找和替换文本(X)...</span></div>
<div class="msep" style="top:168.82px"></div>
<div class="mi dis" style="top:172.75px"><span class="ml">填充(L)...</span><span class="ms">Shift+F5</span></div>
<div class="mi dis" style="top:184.41px"><span class="ml">描边(S)...</span></div>
<div class="mi dis" style="top:196.07px"><span class="ml">内容识别填充...</span></div>
<div class="msep" style="top:209.95px"></div>
<div class="mi dis" style="top:213.88px"><span class="ml">内容识别缩放</span><span class="ms">Alt+Shift+Ctrl+C</span></div>
<div class="mi" style="top:225.54px"><span class="ml">操控变形</span></div>
<div class="mi dis" style="top:237.20px"><span class="ml">透视变形</span></div>
<div class="mi" style="top:248.86px"><span class="ml">自由变换(F)</span><span class="ms">Ctrl+T</span></div>
<div class="mi" style="top:260.52px"><span class="ml">变换</span><span class="ma"></span></div>
<div class="mi dis" style="top:272.18px"><span class="ml">自动对齐图层...</span></div>
<div class="mi dis" style="top:283.84px"><span class="ml">自动混合图层...</span></div>
<div class="msep" style="top:297.73px"></div>
<div class="mi" style="top:301.65px"><span class="ml">定义画笔预设(B)...</span></div>
<div class="mi" style="top:313.31px"><span class="ml">定义图案...</span></div>
<div class="mi dis" style="top:324.97px"><span class="ml">定义自定形状...</span></div>
<div class="msep" style="top:338.86px"></div>
<div class="mi" style="top:342.78px"><span class="ml">清理(R)</span><span class="ma"></span></div>
<div class="msep" style="top:356.67px"></div>
<div class="mi" style="top:360.59px"><span class="ml">Adobe PDF 预设...</span></div>
<div class="mi" style="top:372.25px"><span class="ml">预设</span><span class="ma"></span></div>
<div class="mi" style="top:383.91px"><span class="ml">远程连接...</span></div>
<div class="msep" style="top:397.80px"></div>
<div class="mi" style="top:401.72px"><span class="ml">颜色设置(G)...</span><span class="ms">Shift+Ctrl+K</span></div>
<div class="mi" style="top:413.38px"><span class="ml">指定配置文件...</span></div>
<div class="mi" style="top:425.04px"><span class="ml">转换为配置文件(V)...</span></div>
<div class="msep" style="top:438.93px"></div>
<div class="mi" style="top:442.85px"><span class="ml">键盘快捷键...</span><span class="ms">Alt+Shift+Ctrl+K</span></div>
<div class="mi" style="top:454.51px"><span class="ml">菜单(U)...</span><span class="ms">Alt+Shift+Ctrl+M</span></div>
<div class="mi" style="top:466.17px"><span class="ml">工具栏...</span></div>
<div class="mi" style="top:477.83px"><span class="ml">首选项(N)</span><span class="ma"></span></div>
</div></div>
</body></html>
